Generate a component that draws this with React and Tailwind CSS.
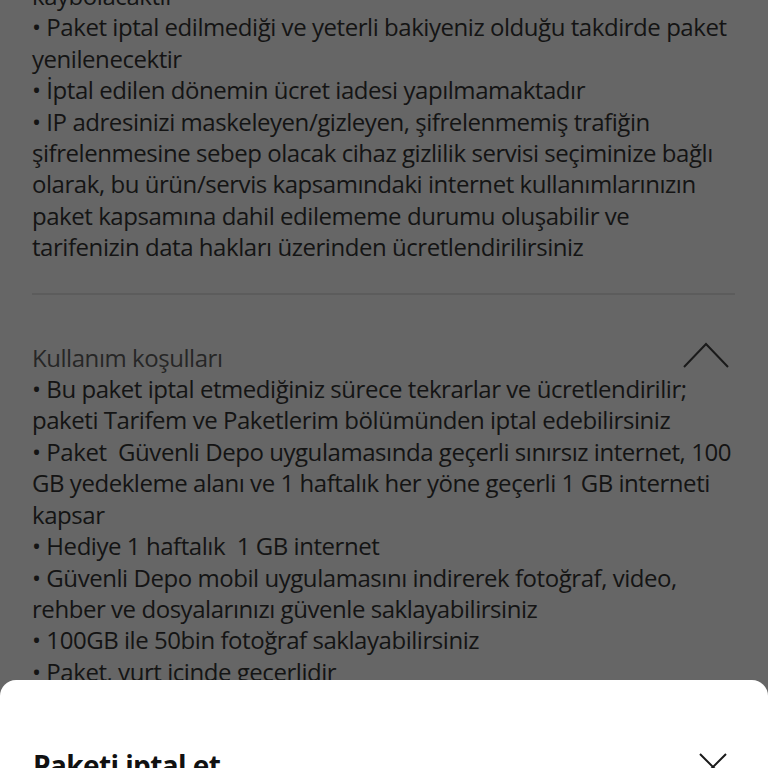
import React from "react";

const sec1 = [
  "kaybolacaktır",
  "• Paket iptal edilmediği ve yeterli bakiyeniz olduğu takdirde paket",
  "yenilenecektir",
  "• İptal edilen dönemin ücret iadesi yapılmamaktadır",
  "• IP adresinizi maskeleyen/gizleyen, şifrelenmemiş trafiğin",
  "şifrelenmesine sebep olacak cihaz gizlilik servisi seçiminize bağlı",
  "olarak, bu ürün/servis kapsamındaki internet kullanımlarınızın",
  "paket kapsamına dahil edilememe durumu oluşabilir ve",
  "tarifenizin data hakları üzerinden ücretlendirilirsiniz",
];

const sec2 = [
  "• Bu paket iptal etmediğiniz sürece tekrarlar ve ücretlendirilir;",
  "paketi Tarifem ve Paketlerim bölümünden iptal edebilirsiniz",
  "• Paket  Güvenli Depo uygulamasında geçerli sınırsız internet, 100",
  "GB yedekleme alanı ve 1 haftalık her yöne geçerli 1 GB interneti",
  "kapsar",
  "• Hediye 1 haftalık  1 GB internet",
  "• Güvenli Depo mobil uygulamasını indirerek fotoğraf, video,",
  "rehber ve dosyalarınızı güvenle saklayabilirsiniz",
  "• 100GB ile 50bin fotoğraf saklayabilirsiniz",
  "• Paket, yurt içinde geçerlidir",
];

export default function App() {
  return (
    <div
      className="relative h-[768px] w-[768px] overflow-hidden bg-[#666666]"
      style={{ fontFamily: '"Open Sans", sans-serif' }}
    >
      <div className="mt-[-20px] pl-[32px] pr-[33px] text-[24px] leading-[31.4px] tracking-[-0.45px] text-[#141414]">
        {sec1.map((l, i) => (
          <div key={i} className="whitespace-pre">{l}</div>
        ))}
        <div className="mt-[30px] h-[2px] bg-[#5c5c5c]" />
        <div className="mt-[47px] flex items-center justify-between">
          <div className="whitespace-pre text-[#262626]">Kullanım koşulları</div>
          <svg width="46" height="26" viewBox="0 0 46 26" className="mr-[6px] mt-[-4px]">
            <path d="M1 25 L23 2 L45 25" fill="none" stroke="#1a1a1a" strokeWidth="2" />
          </svg>
        </div>
        {sec2.map((l, i) => (
          <div key={i} className="whitespace-pre">{l}</div>
        ))}
      </div>
      <div className="absolute left-0 right-0 top-[680px] h-[120px] rounded-t-[16px] bg-white">
        <div className="flex items-start justify-between pl-[33px] pr-[40px] pt-[67px]">
          <div className="text-[28px] font-bold leading-[36px] tracking-[-0.6px] text-[#111]">Paketi iptal et</div>
          <svg width="30" height="30" viewBox="0 0 30 30" className="mt-[5px]">
            <path d="M2 2 L28 28 M28 2 L2 28" fill="none" stroke="#1a1a1a" strokeWidth="2" />
          </svg>
        </div>
      </div>
    </div>
  );
}
